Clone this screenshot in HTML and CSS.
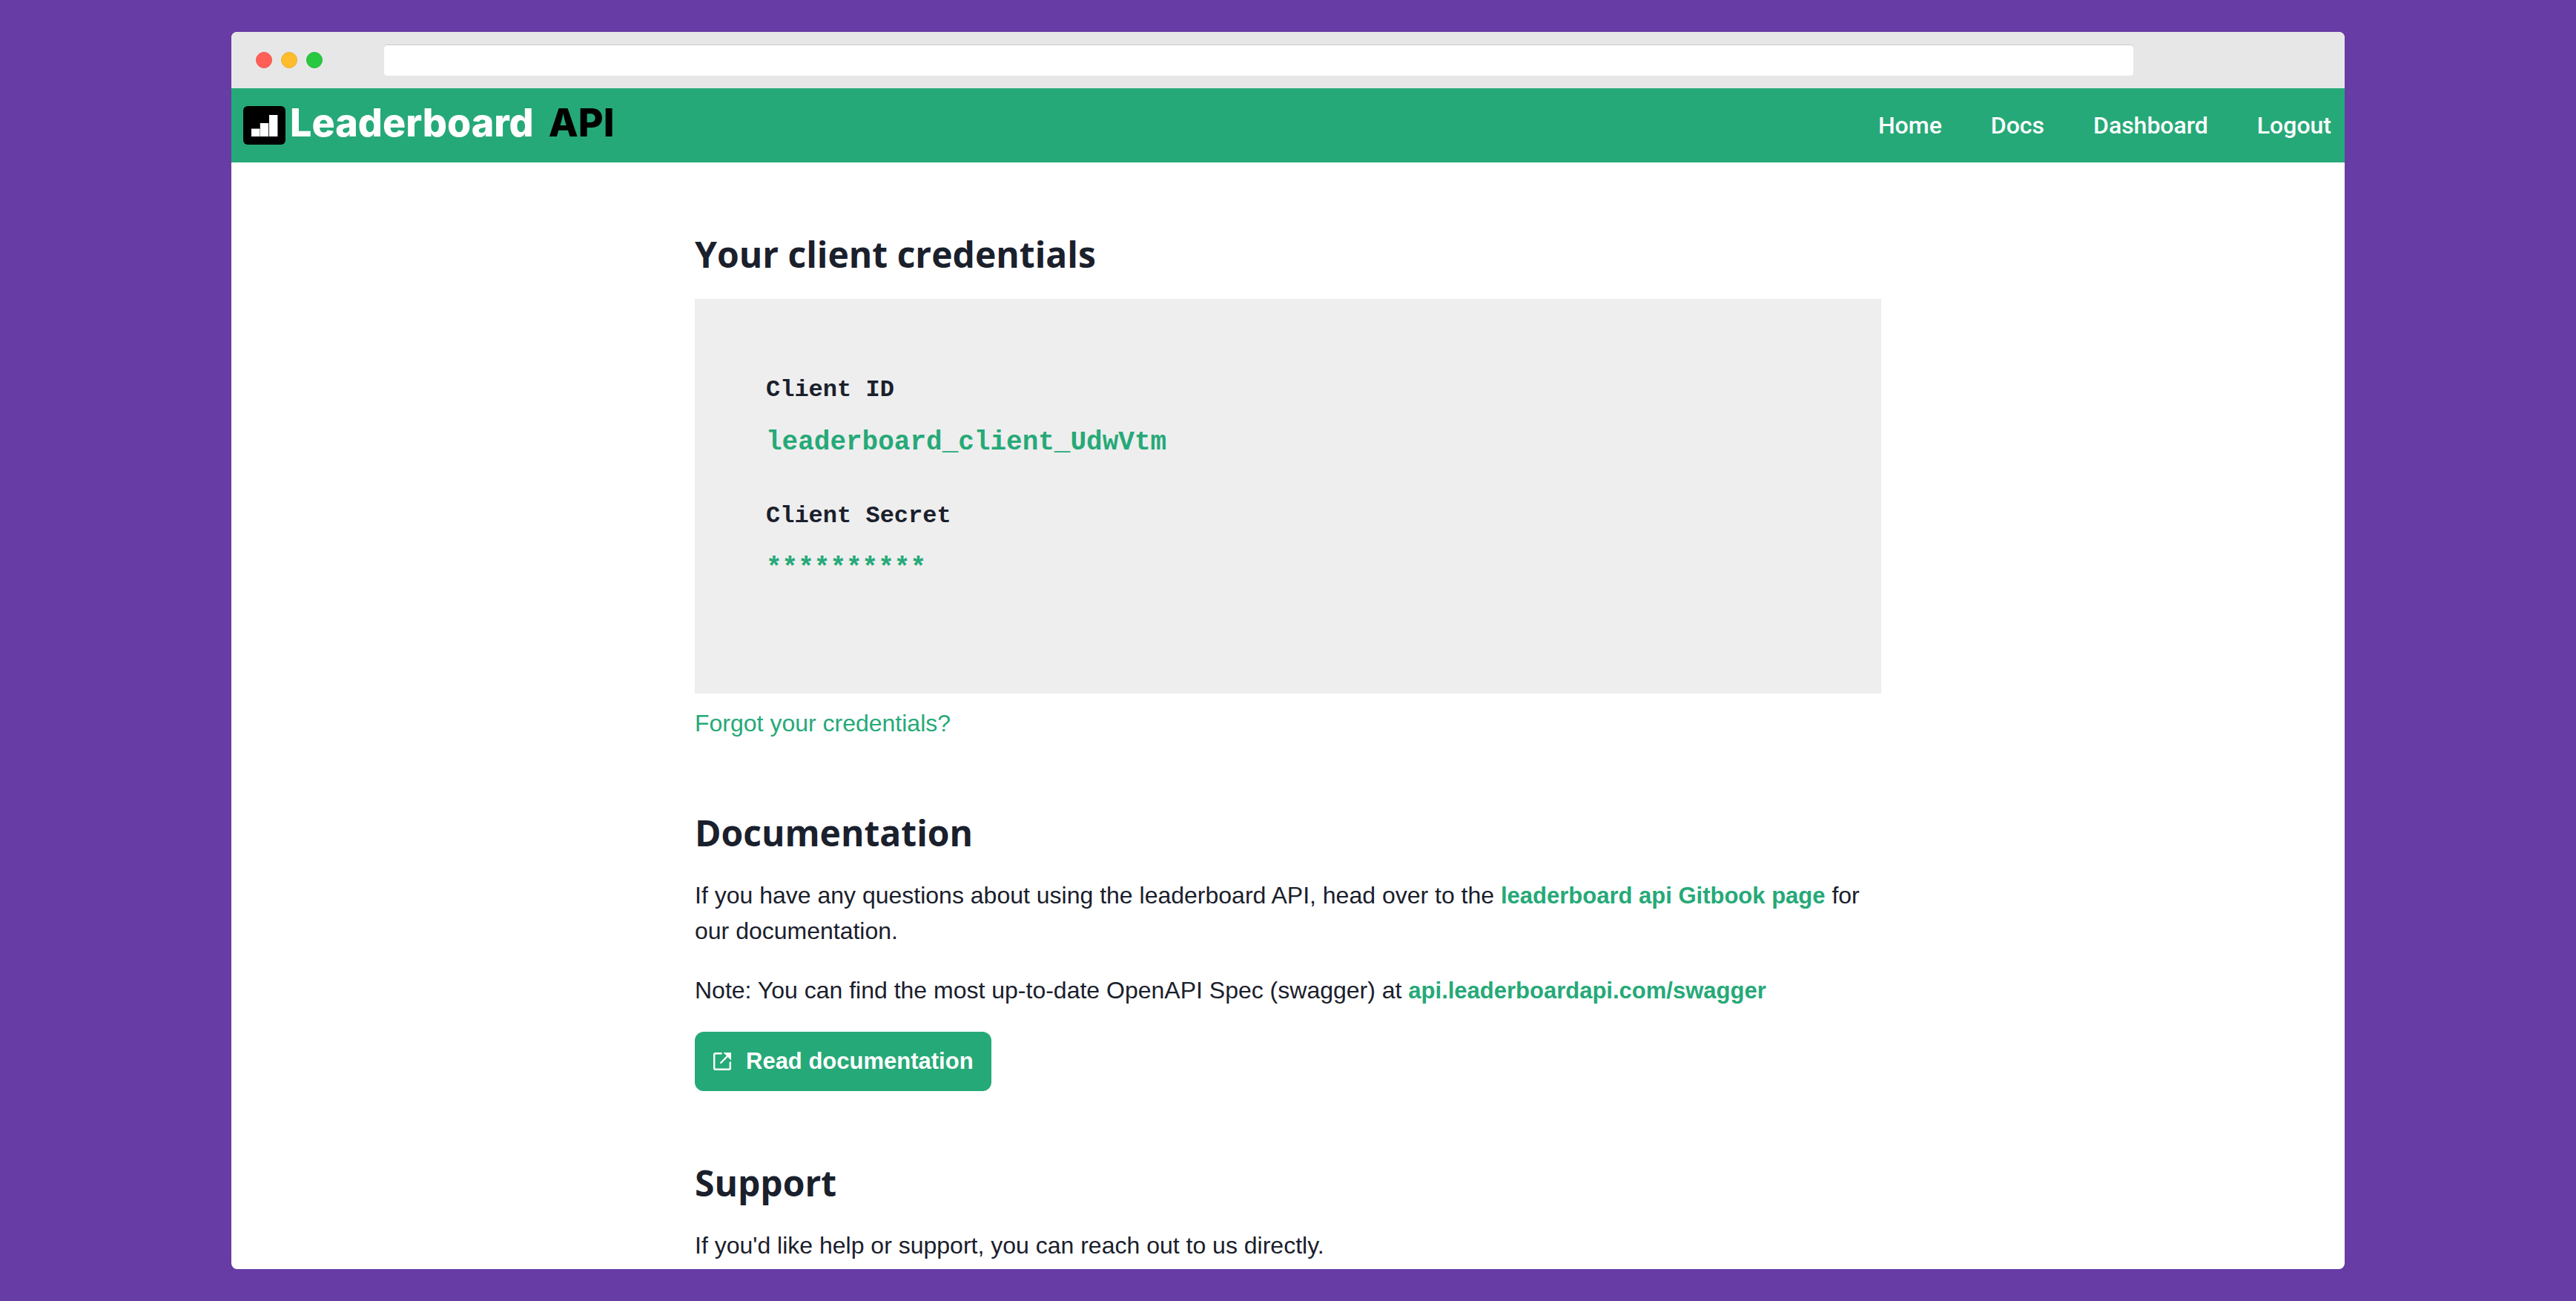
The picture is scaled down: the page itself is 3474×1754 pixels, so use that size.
FILE: index.html
```
<!DOCTYPE html>
<html lang="en">
<head>
  <meta charset="utf-8">
  <meta name="viewport" content="width=device-width, initial-scale=1">
  <title>Leaderboard API</title>
  <link rel="stylesheet" href="styles.css">
</head>
<body>
  <div class="window">
    <div class="chrome">
      <div class="lights">
        <span class="light light-close"></span>
        <span class="light light-minimize"></span>
        <span class="light light-expand"></span>
      </div>
      <input class="address" type="text" aria-label="Address">
    </div>

    <header class="navbar">
      <a class="brand" href="#">
        <svg class="brand-icon" viewBox="0 0 57 52" aria-hidden="true">
          <rect width="57" height="52" rx="6" fill="#000"/>
          <path d="M11 30.5h11.4V41H11zM22.8 23h11.4v18H22.8zM35 12h11.4v29H35z" fill="#fff"/>
        </svg>
        <span class="brand-name"><span>Leaderboard</span><span class="brand-api">API</span></span>
      </a>
      <nav class="links">
        <a href="#">Home</a>
        <a href="#">Docs</a>
        <a href="#">Dashboard</a>
        <a href="#">Logout</a>
      </nav>
    </header>

    <main class="content">
      <section>
        <h2>Your client credentials</h2>
        <dl class="credentials">
          <div class="credential">
            <dt>Client ID</dt>
            <dd>leaderboard_client_UdwVtm</dd>
          </div>
          <div class="credential">
            <dt>Client Secret</dt>
            <dd>**********</dd>
          </div>
        </dl>
        <a class="forgot" href="#">Forgot your credentials?</a>
      </section>

      <section>
        <h2>Documentation</h2>
        <p>If you have any questions about using the leaderboard API, head over to the <a class="strong-link" href="#">leaderboard api Gitbook page</a> for our documentation.</p>
        <p>Note: You can find the most up-to-date OpenAPI Spec (swagger) at <a class="strong-link" href="#">api.leaderboardapi.com/swagger</a></p>
        <button class="button" type="button">
          <svg class="button-icon" viewBox="0 0 24 24" fill="none" stroke="currentColor" stroke-width="2.400" aria-hidden="true">
            <path d="M11.500 1.200H3Q1.200 1.200 1.200 3V21Q1.200 22.800 3 22.800H21Q22.800 22.800 22.800 21V12.500"/>
            <path d="M19 5L9.500 14.500"/>
            <path d="M13.500 0H24V10.500z" fill="currentColor" stroke="none"/>
          </svg>
          Read documentation
        </button>
      </section>

      <section>
        <h2>Support</h2>
        <p>If you'd like help or support, you can reach out to us directly.</p>
      </section>
    </main>
  </div>
</body>
</html>
```
FILE: styles.css
```
* {
  box-sizing: border-box;
}

body {
  margin: 0;
  min-height: 100vh;
  padding: 43px;
  display: flex;
  flex-direction: column;
  align-items: center;
  background: #673ca4;
  color: #1a202c;
  font: 32px/48px "Liberation Sans", Arial, sans-serif;
}

a {
  color: #26a978;
  text-decoration: none;
}

.window {
  flex: 1;
  width: 100%;
  max-width: 2850px;
  overflow: hidden;
  border-radius: 8px;
  background: #fff;
}

.chrome {
  display: flex;
  align-items: center;
  gap: 83px;
  height: 76px;
  padding: 0 285px 0 33px;
  background: #e7e7e7;
}

.lights {
  display: flex;
  gap: 12px;
}

.light {
  width: 22px;
  height: 22px;
  border: 1px solid;
  border-radius: 50%;
}

.light-close {
  background: #ff5f57;
  border-color: #f2564f;
}

.light-minimize {
  background: #ffbd2e;
  border-color: #eeab2c;
}

.light-expand {
  background: #28c940;
  border-color: #23b93a;
}

.address {
  flex: 1;
  min-width: 0;
  height: 42px;
  padding: 0 12px;
  border: 0;
  border-radius: 4px;
  background: #fff;
  box-shadow: inset 0 1px #c9c9c9;
  font: inherit;
}

.navbar {
  display: flex;
  align-items: center;
  justify-content: space-between;
  height: 100px;
  padding: 0 18px 0 16px;
  background: #26a978;
}

.brand {
  display: flex;
  align-items: center;
  gap: 6px;
  color: #fff;
}

.brand-icon {
  width: 57px;
  height: 52px;
}

.brand-name {
  display: flex;
  gap: 20px;
  padding-bottom: 6px;
  font: 800 52px/56px Inter, sans-serif;
}

.brand-api {
  color: #000;
}

.links {
  display: flex;
  gap: 66px;
  font: 500 32px/48px Roboto, sans-serif;
}

.links a {
  color: #fff;
}

.content {
  display: flex;
  flex-direction: column;
  gap: 96px;
  max-width: 1600px;
  margin: 0 auto;
  padding-top: 96px;
}

h2 {
  margin: 0 0 32px;
  font: 700 48px/56px "Open Sans", sans-serif;
}

p {
  margin: 0 0 32px;
}

section:last-child p {
  margin: 0;
}

.credentials {
  display: flex;
  flex-direction: column;
  gap: 44px;
  margin: 0 0 16px;
  padding: 96px 96px 140px;
  background: #eee;
  font-family: "Liberation Mono", monospace;
  font-weight: 700;
}

.credential {
  display: flex;
  flex-direction: column;
  gap: 16px;
}

.credential dt {
  line-height: 54px;
}

.credential dd {
  margin: 0;
  color: #26a978;
  font-size: 36px;
  line-height: 56px;
}

.forgot {
  display: block;
}

.strong-link {
  font-size: 31px;
  font-weight: 700;
  line-height: 32px;
}

.button {
  display: flex;
  align-items: center;
  gap: 20px;
  height: 80px;
  padding: 0 24px 0 25px;
  border: 0;
  border-radius: 12px;
  background: #26a978;
  color: #fff;
  font: 700 31px/48px "Liberation Sans", Arial, sans-serif;
}

.button-icon {
  width: 24px;
  height: 24px;
}
```
